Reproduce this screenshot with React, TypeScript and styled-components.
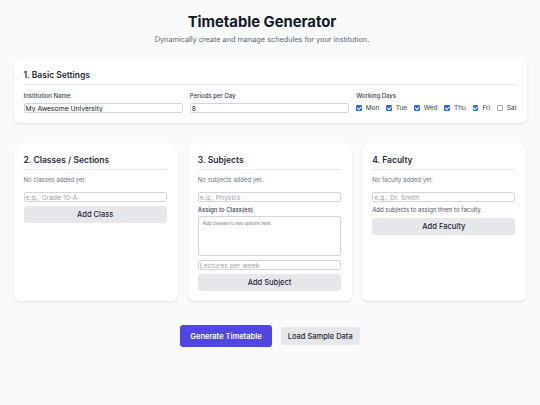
import styled, { createGlobalStyle } from 'styled-components'

const GlobalStyle = createGlobalStyle`
  body {
    margin: 0;
    background: #f9fafb;
    font-family: Inter, "Liberation Sans", sans-serif;
    color: #111827;
  }
`

const days = [
  { name: 'Mon', on: true },
  { name: 'Tue', on: true },
  { name: 'Wed', on: true },
  { name: 'Thu', on: true },
  { name: 'Fri', on: true },
  { name: 'Sat', on: false },
]

const App = () => {
  return (
    <>
      <GlobalStyle />
      <Page>
        <Header>
          <Title>Timetable Generator</Title>
          <Subtitle>Dynamically create and manage schedules for your institution.</Subtitle>
        </Header>

        <Card>
          <CardTitle>1. Basic Settings</CardTitle>
          <SettingsGrid>
            <Field>
              <Label>Institution Name</Label>
              <Input defaultValue='My Awesome University' />
            </Field>
            <Field>
              <Label>Periods per Day</Label>
              <Input defaultValue='8' />
            </Field>
            <Field>
              <Label>Working Days</Label>
              <DaysRow>
                {days.map((d) => (
                  <Day key={d.name}>
                    <Check type='checkbox' defaultChecked={d.on} />
                    <span>{d.name}</span>
                  </Day>
                ))}
              </DaysRow>
            </Field>
          </SettingsGrid>
        </Card>

        <Columns>
          <Card>
            <CardTitle>2. Classes / Sections</CardTitle>
            <Empty>No classes added yet.</Empty>
            <Input placeholder='e.g., Grade 10-A' />
            <GrayButton>Add Class</GrayButton>
          </Card>

          <Card>
            <CardTitle>3. Subjects</CardTitle>
            <Empty>No subjects added yet.</Empty>
            <Input placeholder='e.g., Physics' />
            <SubLabel>Assign to Class(es)</SubLabel>
            <OptionsBox>Add classes to see options here.</OptionsBox>
            <Input placeholder='Lectures per week' />
            <GrayButton>Add Subject</GrayButton>
          </Card>

          <Card>
            <CardTitle>4. Faculty</CardTitle>
            <Empty>No faculty added yet.</Empty>
            <Input placeholder='e.g., Dr. Smith' />
            <Hint>Add subjects to assign them to faculty.</Hint>
            <GrayButton>Add Faculty</GrayButton>
          </Card>
        </Columns>

        <Actions>
          <PrimaryButton>Generate Timetable</PrimaryButton>
          <SecondaryButton>Load Sample Data</SecondaryButton>
        </Actions>
      </Page>
    </>
  )
}

export default App


const Page = styled.div`
    width: 513px;
    margin: 0 auto;
    padding-top: 13px;
    padding-bottom: 40px;
`

const Header = styled.header`
    text-align: center;
    margin-bottom: 14px;
    padding-right: 16px;
`

const Title = styled.h1`
    margin: 0;
    font-size: 14.8px;
    line-height: 18px;
    font-weight: 700;
    color: #111827;
`

const Subtitle = styled.p`
    margin: 4px 0 0 0;
    font-size: 7.3px;
    line-height: 10px;
    color: #5b6472;
`

const Card = styled.section`
    background: #ffffff;
    border-radius: 6px;
    padding: 10px 11px 10px 10px;
    box-shadow: 0 1px 3px rgba(0, 0, 0, 0.08), 0 1px 2px rgba(0, 0, 0, 0.04);
    display: flex;
    flex-direction: column;
    align-items: stretch;
`

const CardTitle = styled.h2`
    margin: 0 0 6px 0;
    padding-bottom: 3px;
    border-bottom: 1px solid #e5e7eb;
    font-size: 8.5px;
    line-height: 12px;
    font-weight: 600;
    color: #1f2937;
`

const SettingsGrid = styled.div`
    display: grid;
    grid-template-columns: repeat(3, minmax(0, 1fr));
    column-gap: 7px;
`

const Field = styled.div`
    display: flex;
    flex-direction: column;
`

const Label = styled.label`
    font-size: 6px;
    line-height: 8px;
    font-weight: 500;
    color: #374151;
    margin: 1px 0 3px 0;
`

const Input = styled.input`
    box-sizing: border-box;
    height: 10px;
    width: 100%;
    margin: 0;
    padding: 0 1px;
    border: 1px solid #d1d5db;
    border-radius: 2px;
    font-family: Inter, "Liberation Sans", sans-serif;
    font-size: 6.8px;
    color: #111827;
    background: #ffffff;
    outline: none;

    &::placeholder {
        color: #9ca3af;
    }
`

const DaysRow = styled.div`
    display: flex;
    align-items: center;
    gap: 7px;
    height: 10px;
`

const Day = styled.label`
    display: flex;
    align-items: center;
    gap: 4px;
    font-size: 6.5px;
    line-height: 8px;
    color: #374151;
`

const Check = styled.input`
    appearance: none;
    box-sizing: border-box;
    flex: 0 0 5.5px;
    width: 5.5px;
    height: 5.5px;
    margin: 0;
    border: 1px solid #9ca3af;
    border-radius: 1px;
    background: #ffffff;
    display: inline-flex;
    align-items: center;
    justify-content: center;

    &:checked {
        background: #2563eb;
        border-color: #2563eb;
    }

    &:checked::after {
        content: '';
        width: 1.5px;
        height: 2.5px;
        border-right: 0.8px solid #fff;
        border-bottom: 0.8px solid #fff;
        transform: rotate(45deg) translate(-0.3px, -0.3px);
    }
`

const Empty = styled.p`
    margin: 0 0 8px 0;
    font-size: 6px;
    line-height: 8px;
    color: #6b7280;
`

const SubLabel = styled.div`
    margin: 4px 0 2px 0;
    font-size: 6px;
    line-height: 8px;
    font-weight: 500;
    color: #374151;
`

const Hint = styled.div`
    margin: 4px 0 0 0;
    font-size: 6px;
    line-height: 8px;
    color: #4b5563;
`

const OptionsBox = styled.div`
    box-sizing: border-box;
    height: 40px;
    margin-bottom: 4px;
    padding: 4px;
    border: 1px solid #d1d5db;
    border-radius: 2px;
    font-size: 4.5px;
    line-height: 6px;
    color: #6b7280;
`

const GrayButton = styled.button`
    margin-top: 4px;
    height: 17px;
    border: none;
    border-radius: 3px;
    background: #e5e7eb;
    color: #1f2937;
    font-family: Inter, "Liberation Sans", sans-serif;
    font-size: 7.5px;
    font-weight: 500;
    cursor: pointer;
`

const Columns = styled.div`
    margin-top: 21px;
    display: grid;
    grid-template-columns: repeat(3, minmax(0, 1fr));
    column-gap: 10px;
    align-items: stretch;
`

const Actions = styled.div`
    margin-top: 24px;
    display: flex;
    justify-content: center;
    align-items: center;
    gap: 9px;
`

const PrimaryButton = styled.button`
    height: 22px;
    padding: 0 10px;
    border: none;
    border-radius: 3px;
    background: #4f46e5;
    color: #ffffff;
    font-family: Inter, "Liberation Sans", sans-serif;
    font-size: 7.5px;
    font-weight: 600;
    cursor: pointer;
`

const SecondaryButton = styled.button`
    height: 18px;
    padding: 0 7px;
    border: none;
    border-radius: 3px;
    background: #e5e7eb;
    color: #1f2937;
    font-family: Inter, "Liberation Sans", sans-serif;
    font-size: 7.5px;
    font-weight: 500;
    cursor: pointer;
`
